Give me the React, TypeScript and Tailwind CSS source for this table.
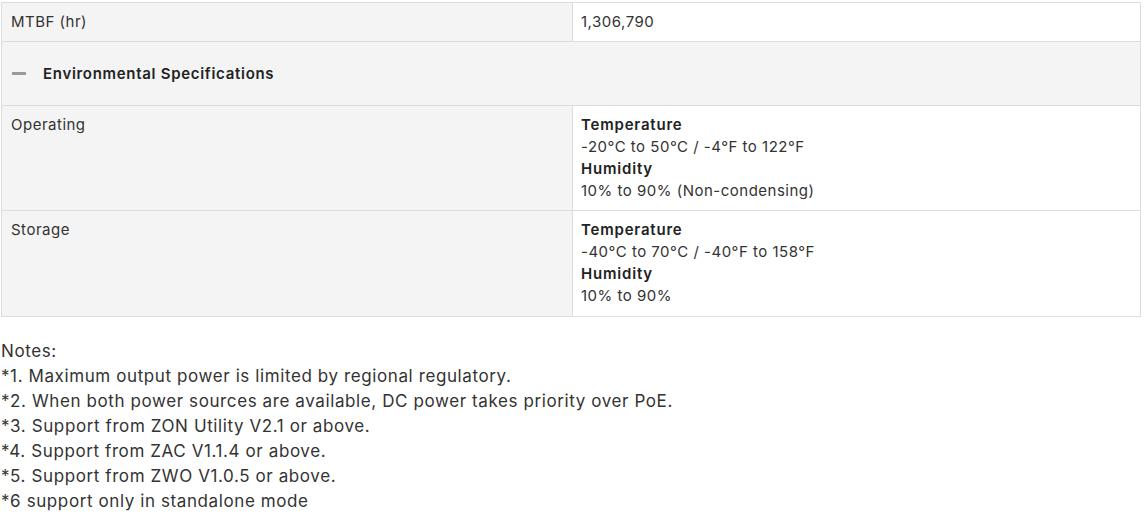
import React from 'react';

const rows = [
  {
    label: 'Operating',
    temp: '-20°C to 50°C / -4°F to 122°F',
    hum: '10% to 90% (Non-condensing)',
    pad: 'pb-2',
  },
  {
    label: 'Storage',
    temp: '-40°C to 70°C / -40°F to 158°F',
    hum: '10% to 90%',
    pad: 'pb-[9px]',
  },
];

const notes = [
  'Notes:',
  '*1. Maximum output power is limited by regional regulatory.',
  '*2. When both power sources are available, DC power takes priority over PoE.',
  '*3. Support from ZON Utility V2.1 or above.',
  '*4. Support from ZAC V1.1.4 or above.',
  '*5. Support from ZWO V1.0.5 or above.',
  '*6 support only in standalone mode',
];

const App: React.FC = () => {
  return (
    <div className="bg-white w-[1147px] h-[516px] pt-[2px] pl-px font-['Inter',sans-serif] text-[#333]">
      <table className="w-[1140px] border-collapse table-fixed text-[15px] leading-[22px] tracking-[0.5px]">
        <colgroup>
          <col className="w-[571px]" />
          <col />
        </colgroup>
        <tbody>
          <tr>
            <td className="border border-[#dddddd] bg-[#f4f4f4] px-[9px] py-2 align-top">MTBF (hr)</td>
            <td className="border border-[#dddddd] bg-white px-[8px] py-2 align-top">1,306,790</td>
          </tr>
          <tr>
            <td colSpan={2} className="border border-[#dddddd] bg-[#f4f4f4] h-[64px] pl-[10px]">
              <div className="flex items-center gap-[17px] font-semibold text-[#222] tracking-[0.7px]">
                <span className="block w-[14px] h-[3px] bg-[#9a9a9a]" />
                Environmental Specifications
              </div>
            </td>
          </tr>
          {rows.map((r) => (
            <tr key={r.label}>
              <td className={`border border-[#dddddd] bg-[#f4f4f4] px-[9px] pt-2 align-top ${r.pad}`}>{r.label}</td>
              <td className={`border border-[#dddddd] bg-white px-[8px] pt-2 align-top ${r.pad}`}>
                <div className="font-semibold text-[#222] tracking-[0.8px]">Temperature</div>
                <div>{r.temp}</div>
                <div className="font-semibold text-[#222] tracking-[0.8px]">Humidity</div>
                <div>{r.hum}</div>
              </td>
            </tr>
          ))}
        </tbody>
      </table>
      <div className="mt-[22px] text-[17px] leading-[25px] tracking-[0.6px]">
        {notes.map((n) => (
          <div key={n}>{n}</div>
        ))}
      </div>
    </div>
  );
};

export default App;
